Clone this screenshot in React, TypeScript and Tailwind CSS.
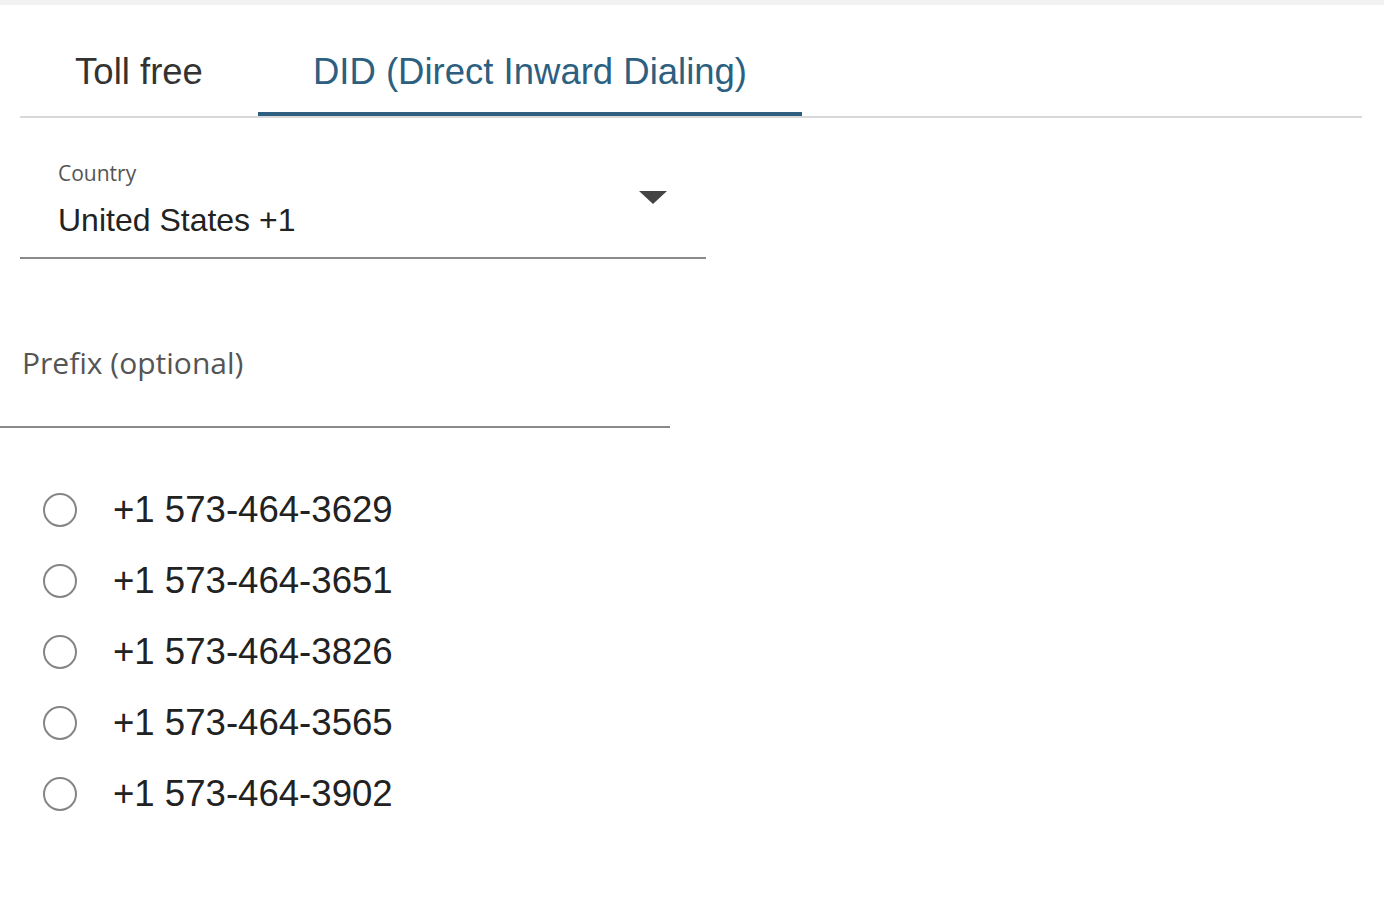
import React, { useState } from 'react';

const NUMBERS = [
  '+1 573-464-3629',
  '+1 573-464-3651',
  '+1 573-464-3826',
  '+1 573-464-3565',
  '+1 573-464-3902',
];

const arial = "font-['Liberation_Sans',Arial,sans-serif]";
const openSans = "font-['Open_Sans','Noto_Sans',sans-serif]";

export default function App() {
  const [tab, setTab] = useState<'toll' | 'did'>('did');
  const [selected, setSelected] = useState<string | null>(null);

  return (
    <div className={`min-h-screen bg-white ${arial}`}>
      <div className="h-[5px] bg-[#f2f2f2]" />

      {/* Tabs */}
      <div className="ml-[20px] flex w-[1342px] border-b-2 border-[#d9d9d9]">
        <button
          onClick={() => setTab('toll')}
          className={`flex h-[111px] w-[238px] items-start justify-center border-b-4 pt-[47px] text-[36.5px] leading-[40px] ${
            tab === 'toll' ? 'border-[#2e5f80] text-[#2d5f80]' : 'border-transparent text-[#333333]'
          }`}
        >
          <span>Toll free</span>
        </button>
        <button
          onClick={() => setTab('did')}
          className={`flex h-[111px] w-[544px] items-start justify-center border-b-4 pt-[47px] text-[36.5px] leading-[40px] ${
            tab === 'did' ? 'border-[#2e5f80] text-[#2d5f80]' : 'border-transparent text-[#333333]'
          }`}
        >
          <span>DID (Direct Inward Dialing)</span>
        </button>
      </div>

      {/* Country select */}
      <div className="relative ml-[20px] mt-[41px] w-[686px] border-b-2 border-[#8a8a8a] pb-[18px] pl-[38px]">
        <div className={`${openSans} text-[21px] leading-[28px] text-[#555555]`}>Country</div>
        <div className="mt-[15px] text-[32px] leading-[37px] text-[#222222]">United States +1</div>
        <svg
          className="absolute right-[39px] top-[32px]"
          width="28"
          height="13"
          viewBox="0 0 28 13"
        >
          <path d="M0 0 L28 0 L14 13 Z" fill="#444444" />
        </svg>
      </div>

      {/* Prefix input */}
      <div className="mt-[84px] w-[670px] border-b-2 border-[#8a8a8a] pb-[43px] pl-[22px]">
        <input
          placeholder="Prefix (optional)"
          className={`${openSans} block h-[40px] w-full bg-transparent text-[30px] leading-[40px] text-[#222222] outline-none placeholder:text-[#555555]`}
        />
      </div>

      {/* Number list */}
      <div className="mt-[46px] flex flex-col">
        {NUMBERS.map((n) => (
          <label key={n} className="flex h-[71px] cursor-pointer items-center">
            <span
              onClick={() => setSelected(n)}
              className="ml-[43px] flex h-[34px] w-[34px] items-center justify-center rounded-full border-2 border-[#858585]"
            >
              {selected === n && <span className="h-[18px] w-[18px] rounded-full bg-[#2e5f80]" />}
            </span>
            <span className="ml-[36px] text-[36.6px] leading-[40px] text-[#222222]">{n}</span>
          </label>
        ))}
      </div>
    </div>
  );
}
